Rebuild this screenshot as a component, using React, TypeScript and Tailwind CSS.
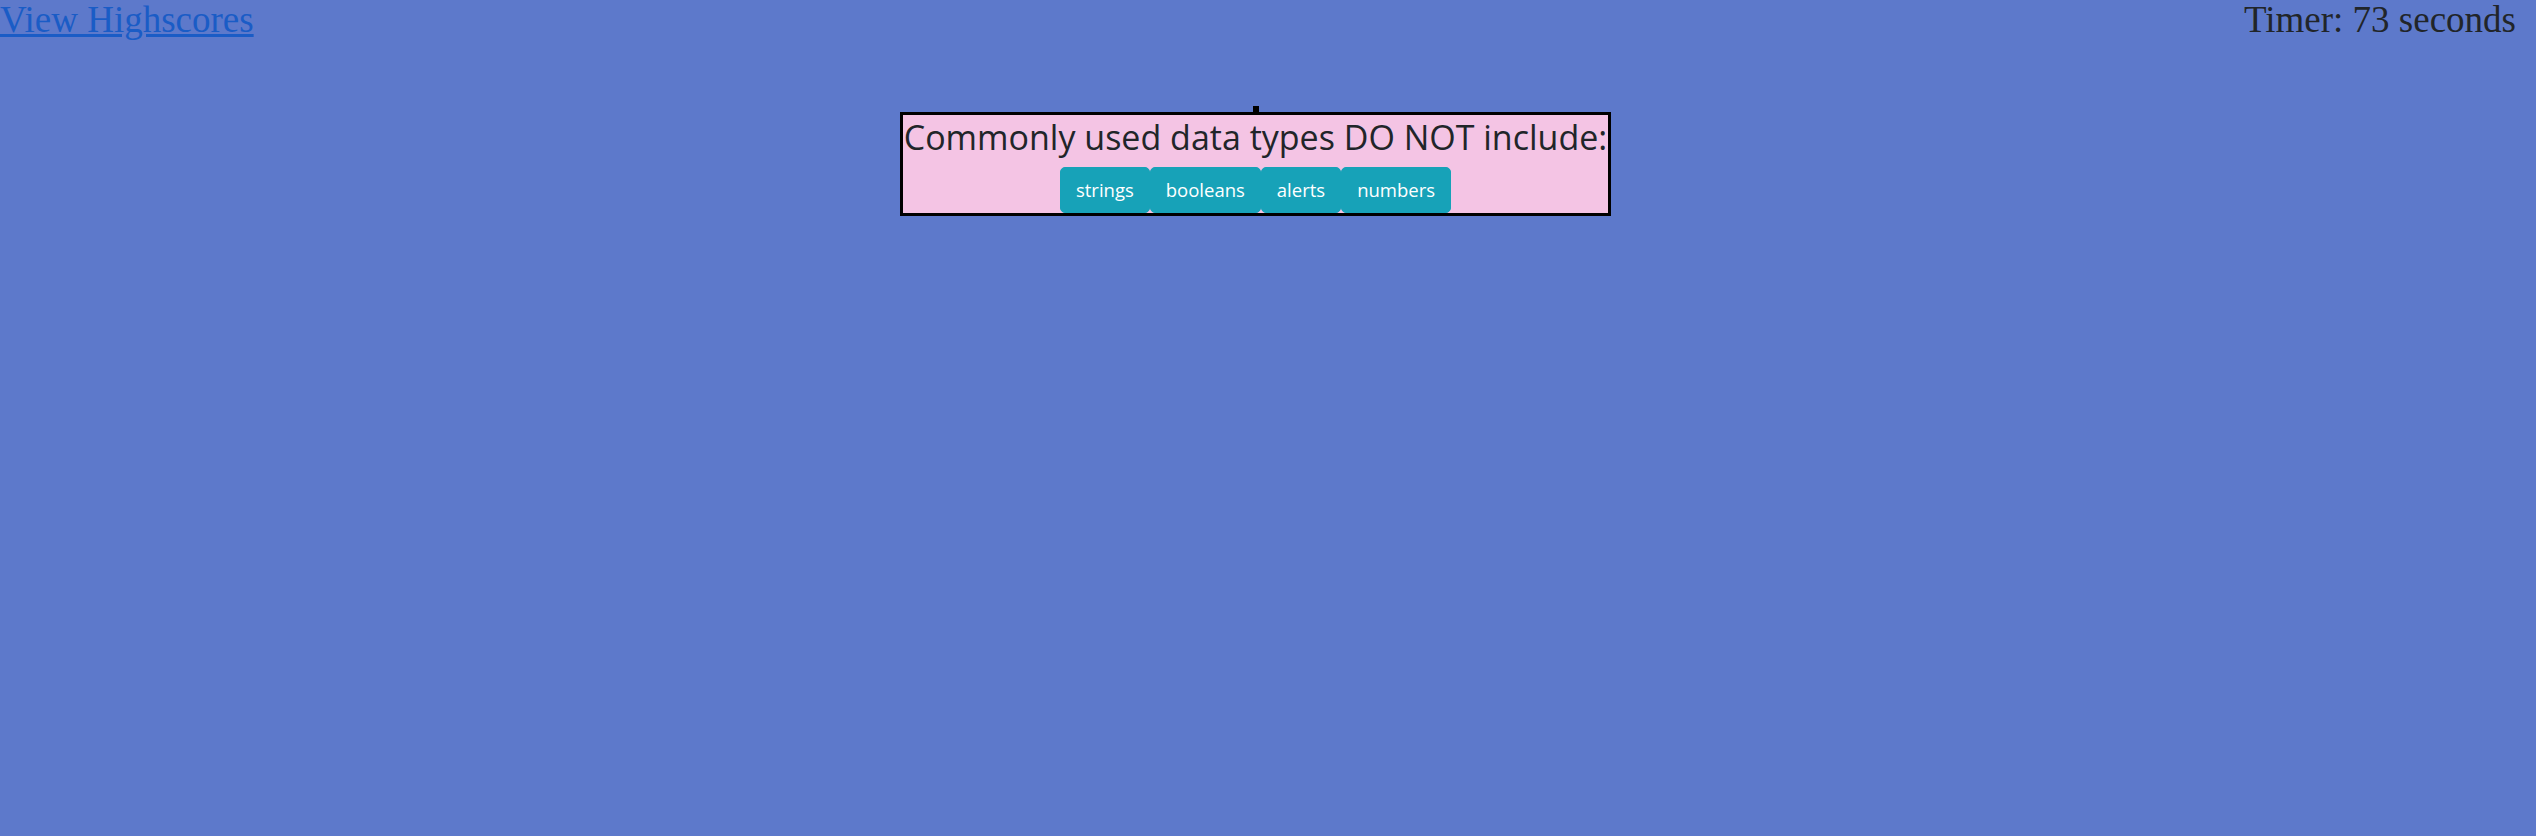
export default function App() {
  const answers = ['strings', 'booleans', 'alerts', 'numbers'];

  return (
    <div className="min-h-screen bg-[#5d79cb]">
      <header className="flex items-start justify-between font-['Liberation_Serif',serif] text-[37px] leading-[40px]">
        <a href="#" className="text-[#1a5cc6] underline">View Highscores</a>
        <p className="mr-5 text-[#212529]">Timer: 73 seconds</p>
      </header>

      <main className="mt-[66px] mr-[25px] flex flex-col items-center">
        <div className="h-1.5 w-1.5 bg-black" />
        <div className="border-[3px] border-black bg-[#f4c4e4] text-center font-['Open_Sans',sans-serif] text-[#212529]">
          <h2 className="mb-2 px-px text-[34px] font-[500] leading-[44px]">Commonly used data types DO NOT include:</h2>
          <div className="flex justify-center">
            {answers.map(a => (
              <button
                key={a}
                className="rounded-[5px] border border-[#17a2b8] bg-[#17a2b8] px-[15px] py-[7px] text-[18.5px] leading-[30px] text-white"
              >
                {a}
              </button>
            ))}
          </div>
        </div>
      </main>
    </div>
  );
}
